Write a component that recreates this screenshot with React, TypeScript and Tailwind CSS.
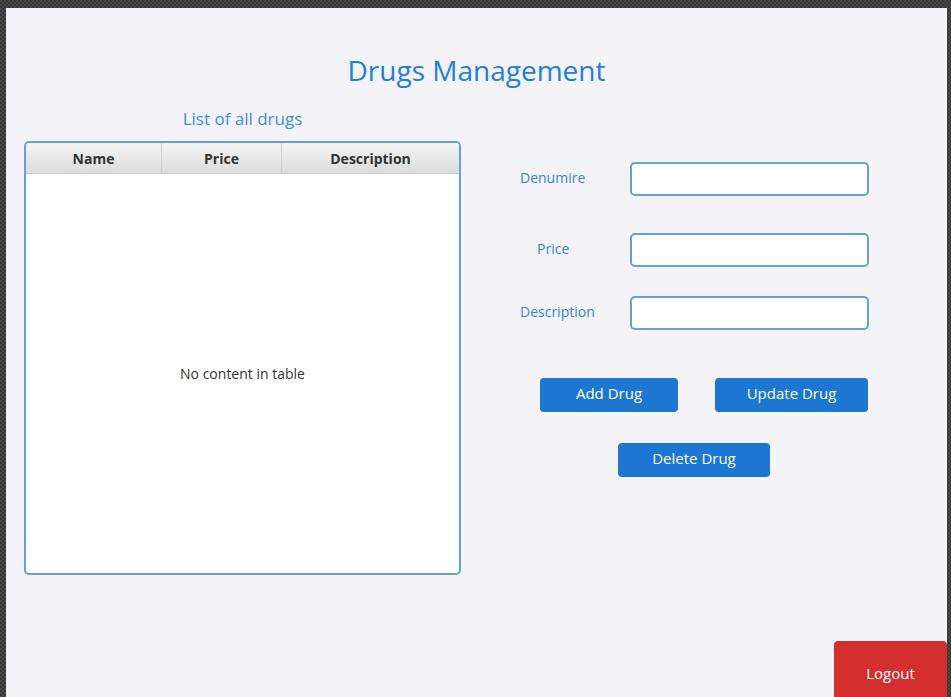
import React from "react";

const font = { fontFamily: '"Open Sans", "Noto Sans", Arial, sans-serif' };

export default function App() {
  return (
    <div
      className="w-[951px] h-[697px] overflow-hidden bg-[#3f3f3f] bg-[repeating-conic-gradient(#353535_0%_25%,#4a4a4a_0%_50%)] bg-[length:4px_4px] pl-[6px] pt-[8px]"
      style={font}
    >
      {/* main panel */}
      <div className="w-[941px] h-[689px] bg-[#f3f3f8] flex flex-col overflow-hidden">
        <h1 className="mt-[44px] h-[36px] leading-[36px] text-center text-[28px] text-[#1f7fe0]">
          Drugs Management
        </h1>

        <div className="flex mt-[19px]">
          {/* table side */}
          <div className="ml-[18px] w-[437px] flex flex-col">
            <p className="h-[24px] leading-[24px] text-center text-[17px] text-[#3a8fe3]">
              List of all drugs
            </p>
            <div className="mt-[10px] h-[434px] bg-white border-2 border-[#64a0e0] rounded-[5px] flex flex-col overflow-hidden">
              <div className="flex h-[31px] bg-gradient-to-b from-[#f4f4f4] to-[#dcdcdc] border-b border-[#c9c9c9] text-[14px] font-bold text-[#333]">
                <div className="w-[136px] flex items-center justify-center border-r border-[#cfcfcf]">Name</div>
                <div className="w-[120px] flex items-center justify-center border-r border-[#cfcfcf]">Price</div>
                <div className="flex-1 flex items-center justify-center">Description</div>
              </div>
              <div className="flex-1 flex items-center justify-center text-[14px] text-[#333]">
                No content in table
              </div>
            </div>
          </div>

          {/* form side */}
          <div className="ml-[59px] mt-[55px] flex flex-col">
            <div className="flex items-center">
              <label className="w-[110px] pb-[4px] text-[14px] text-[#3585d8]">Denumire</label>
              <input className="w-[239px] h-[34px] bg-white border-2 border-[#64a0e0] rounded-[5px] outline-none" />
            </div>
            <div className="flex items-center mt-[37px]">
              <label className="w-[110px] pl-[17px] pb-[4px] text-[14px] text-[#3585d8]">Price</label>
              <input className="w-[239px] h-[34px] bg-white border-2 border-[#64a0e0] rounded-[5px] outline-none" />
            </div>
            <div className="flex items-center mt-[29px]">
              <label className="w-[110px] pb-[4px] text-[14px] text-[#3585d8]">Description</label>
              <input className="w-[239px] h-[34px] bg-white border-2 border-[#64a0e0] rounded-[5px] outline-none" />
            </div>

            <div className="flex mt-[48px] ml-[20px] gap-[37px]">
              <button className="w-[138px] h-[34px] pb-[3px] bg-[#1e76d3] text-white text-[15px] rounded-[4px]">Add Drug</button>
              <button className="w-[153px] h-[34px] pb-[3px] bg-[#1e76d3] text-white text-[15px] rounded-[4px]">Update Drug</button>
            </div>
            <div className="flex mt-[31px] ml-[98px]">
              <button className="w-[152px] h-[34px] pb-[3px] bg-[#1e76d3] text-white text-[15px] rounded-[4px]">Delete Drug</button>
            </div>
          </div>
        </div>

        <div className="flex justify-end mt-[66px]">
          <button className="w-[113px] h-[66px] pb-[2px] bg-[#d32f2f] text-white text-[15px] rounded-t-[4px]">Logout</button>
        </div>
      </div>
    </div>
  );
}
